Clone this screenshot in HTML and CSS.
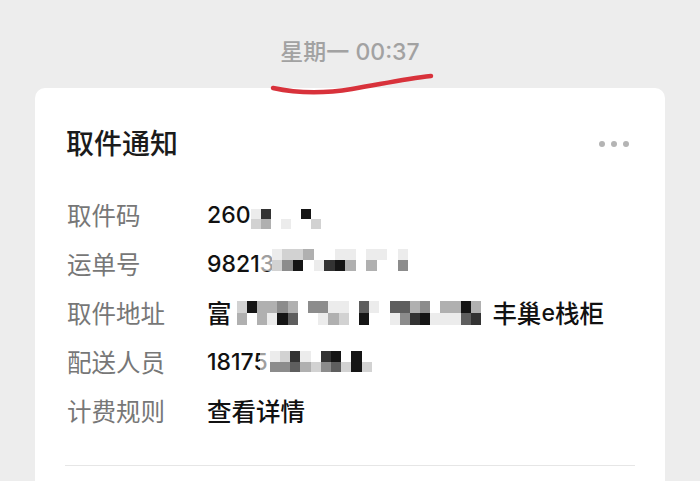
FILE: index.html
```html
<!DOCTYPE html>
<html lang="zh-CN">
<head>
<meta charset="utf-8">
<title>取件通知</title>
<link rel="stylesheet" href="styles.css">
</head>
<body>
<div class="screen">
  <header class="time-bar"><span class="time">星期一 <span class="clock">00:37</span></span></header>
  <svg class="mark" width="700" height="110" viewBox="0 0 700 110" aria-hidden="true">
    <path d="M273 88 C 296 93, 322 94, 352 89 S 404 79, 431 76" fill="none" stroke="#d8323b" stroke-width="4.5" stroke-linecap="round"/>
  </svg>
  <section class="card">
    <div class="card-head">
      <h1 class="title">取件通知</h1>
      <span class="more"><i></i><i></i><i></i></span>
    </div>
    <dl class="fields">
      <div class="row">
        <dt>取件码</dt>
        <dd><span class="num">260</span><span class="mosaic m1"><i class="k1"></i><i class="k2"></i><i class="k6"></i><i class="k3"></i><i></i><i></i><i></i><i class="k1"></i><i></i><i></i><i class="k7"></i><i></i><i></i><i class="k2"></i></span></dd>
      </div>
      <div class="row">
        <dt>运单号</dt>
        <dd><span class="num">98213</span><span class="mosaic m2"><i class="w"></i><i class="w"></i><i class="k1"></i><i class="k2"></i><i class="k2"></i><i class="k4"></i><i class="k2"></i><i class="k7"></i><i class="k3"></i><i></i><i></i><i class="k1"></i><i></i><i class="k6"></i><i class="k1"></i><i class="k7"></i><i class="k1"></i><i class="k3"></i><i></i><i></i><i class="k1"></i><i class="k3"></i><i class="k1"></i><i></i><i></i><i></i><i class="k1"></i><i class="k4"></i></span></dd>
      </div>
      <div class="row">
        <dt>取件地址</dt>
        <dd>富<span class="mosaic m3"><i></i><i></i><i class="k2"></i><i class="k3"></i><i class="k7"></i><i></i><i class="k3"></i><i class="k3"></i><i class="k3"></i><i class="k1"></i><i class="k4"></i><i class="k7"></i><i class="k3"></i><i class="k5"></i><i></i><i></i><i class="k4"></i><i></i><i class="k4"></i><i class="k1"></i><i class="k1"></i><i class="k3"></i><i class="k1"></i><i class="k2"></i><i></i><i></i><i class="k5"></i><i class="k7"></i><i class="k1"></i><i></i><i></i><i></i><i class="k5"></i><i class="k1"></i><i class="k5"></i><i class="k4"></i><i class="k3"></i><i class="k6"></i><i class="k4"></i><i class="k7"></i><i></i><i class="k1"></i><i class="k3"></i><i class="k1"></i><i class="k3"></i><i class="k1"></i><i class="k7"></i><i class="k5"></i><i class="k3"></i><i class="k6"></i><i></i><i></i></span>丰巢<span class="num">e</span>栈柜</dd>
      </div>
      <div class="row">
        <dt>配送人员</dt>
        <dd><span class="num">18175</span><span class="mosaic m4"><i class="w"></i><i class="w"></i><i class="k1"></i><i class="k4"></i><i class="k2"></i><i class="k4"></i><i class="k6"></i><i class="k5"></i><i class="k1"></i><i class="k3"></i><i></i><i class="k2"></i><i class="k6"></i><i class="k4"></i><i class="k7"></i><i class="k5"></i><i></i><i class="k2"></i><i class="k7"></i><i class="k7"></i><i></i><i class="k2"></i></span></dd>
      </div>
      <div class="row">
        <dt>计费规则</dt>
        <dd>查看详情</dd>
      </div>
    </dl>
    <hr class="sep">
  </section>
</div>
</body>
</html>
```

FILE: styles.css
```css
html, body {
  margin: 0;
  padding: 0;
}
body {
  background: #ededed;
  font-family: Inter, "Noto Sans CJK SC", sans-serif;
  overflow: hidden;
}
.screen {
  position: relative;
  width: 700px;
  height: 481px;
  overflow: hidden;
}
.time-bar {
  height: 88px;
  box-sizing: border-box;
  padding-top: 37px;
  text-align: center;
}
.time {
  display: inline-block;
  font-size: 23px;
  line-height: 30px;
  font-weight: 500;
  color: #a2a2a2;
}
.mark {
  position: absolute;
  left: 0;
  top: 0;
  z-index: 2;
}
.card {
  margin: 0 35px;
  height: 430px;
  background: #fff;
  border-radius: 10px 10px 0 0;
}
.card-head {
  display: flex;
  align-items: center;
  justify-content: space-between;
  padding: 36px 36px 0 31px;
}
.title {
  margin: 0;
  font-size: 28px;
  line-height: 40px;
  font-weight: 500;
  color: #1b1b1b;
}
.more {
  display: flex;
  gap: 6px;
}
.more i {
  width: 6px;
  height: 6px;
  border-radius: 50%;
  background: #b4b4b4;
}
.fields {
  margin: 26px 0 0 0;
  padding: 0 36px 0 32px;
}
.row {
  display: flex;
  align-items: center;
  height: 49px;
}
.row dt {
  width: 140px;
  flex: none;
  font-size: 24.5px;
  color: #777;
}
.row dd {
  margin: 0;
  display: flex;
  align-items: center;
  font-size: 24.5px;
  font-weight: 500;
  color: #111;
}
.num {
  font-size: 23px;
  font-weight: 500;
}
.mosaic {
  display: inline-grid;
  grid-auto-flow: column;
  filter: blur(0.4px);
}
.mosaic i {
  display: block;
}
.m1 {
  grid-template-rows: 10px 10px;
  grid-auto-columns: 10px;
  margin-top: 8px;
}
.m2 {
  grid-template-rows: 11px 11px;
  grid-auto-columns: 10.5px;
  margin-bottom: 8px;
  margin-left: -13px;
}
.m3 {
  grid-template-rows: 12px 12px;
  grid-auto-columns: 10.2px;
  margin-left: -5px;
  margin-right: 1px;
}
.m4 {
  grid-template-rows: 10.5px 10.5px;
  grid-auto-columns: 10.2px;
  margin-left: -8px;
}
.w { background: rgba(255, 255, 255, 0.6); }
.k1 { background: #ececec; }
.k2 { background: #d2d2d2; }
.k3 { background: #b0b0b0; }
.k4 { background: #8c8c8c; }
.k5 { background: #5e5e5e; }
.k6 { background: #333; }
.k7 { background: #151515; }
.sep {
  margin: 30px 30px 0 30px;
  border: 0;
  height: 1px;
  background: #e6e6e6;
}
```
